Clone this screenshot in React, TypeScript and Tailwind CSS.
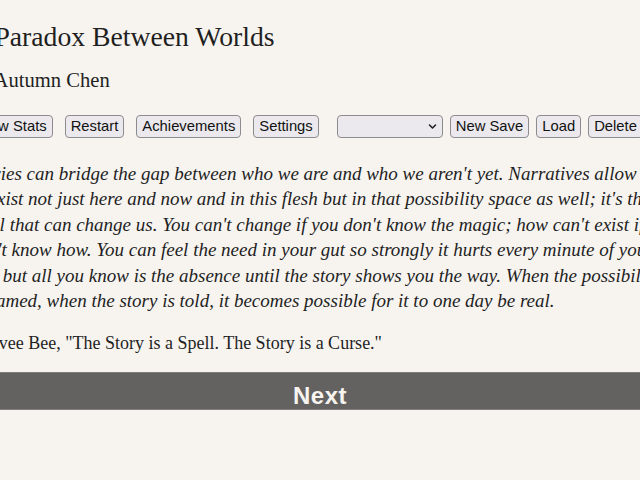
import React from "react";

const serif = { fontFamily: '"Liberation Serif", "Times New Roman", serif' };

function Btn({ children }: { children: React.ReactNode }) {
  return (
    <button className="h-[23px] shrink-0 rounded-[4px] border border-[#8c8b8e] bg-[#ebe9ed] px-[5px] text-[14.8px] leading-[17px] text-[#111] font-['Liberation_Sans',Arial,sans-serif]">
      {children}
    </button>
  );
}

const lines = [
  "Stories can bridge the gap between who we are and who we aren't yet. Narratives allow us",
  "to exist not just here and now and in this flesh but in that possibility space as well; it's the",
  "spell that can change us. You can't change if you don't know the magic; how can't exist if you",
  "don't know how. You can feel the need in your gut so strongly it hurts every minute of your",
  "life, but all you know is the absence until the story shows you the way. When the possibility",
  "is named, when the story is told, it becomes possible for it to one day be real.",
];

export default function App() {
  return (
    <div className="h-[480px] w-[640px] overflow-hidden bg-[#f7f4f0] text-[#1f1f1f]">
      <div className="ml-[-31px] w-[760px] pt-[21px]" style={serif}>
        <h1 className="whitespace-nowrap text-[27.7px] leading-[32px] font-normal">A Paradox Between Worlds</h1>
        <h2 className="mt-[15px] whitespace-nowrap text-[20.6px] leading-[24px] font-normal">by Autumn Chen</h2>

        <div className="ml-[2px] mt-[23px] flex items-center gap-[18px]">
          <div className="flex items-center gap-[12px]">
            <Btn>View Stats</Btn>
            <Btn>Restart</Btn>
            <Btn>Achievements</Btn>
            <Btn>Settings</Btn>
          </div>
          <div className="flex items-center gap-[7px]">
            <div className="relative h-[23px] w-[106px] shrink-0 rounded-[4px] border border-[#8c8b8e] bg-[#ebe9ed]">
              <svg
                className="absolute right-[5px] top-[7px]"
                width="9"
                height="7"
                viewBox="0 0 9 7"
                fill="none"
                stroke="#222"
                strokeWidth="1.6"
                strokeLinecap="round"
                strokeLinejoin="round"
              >
                <path d="M1.5 2 L4.5 5 L7.5 2" />
              </svg>
            </div>
            <Btn>New Save</Btn>
            <Btn>Load</Btn>
            <Btn>Delete</Btn>
          </div>
        </div>

        <p className="mt-[23px] whitespace-nowrap text-[19px] italic leading-[25.4px]">
          {lines.map((l, i) => (
            <span key={i} className="block">
              {l}
            </span>
          ))}
        </p>

        <p className="mt-[18px] whitespace-nowrap text-[18px] leading-[24px]">
          —Avee Bee, "The Story is a Spell. The Story is a Curse."
        </p>
      </div>

      <div className="mt-[17px] flex h-[38px] w-full items-center justify-center border-y border-[#7f7e7d] bg-[#636261] pt-[9px]">
        <span className="text-[24px] font-bold leading-none tracking-[0.5px] text-[#f7f4f0] font-['Liberation_Sans',Arial,sans-serif]">
          Next
        </span>
      </div>
    </div>
  );
}
